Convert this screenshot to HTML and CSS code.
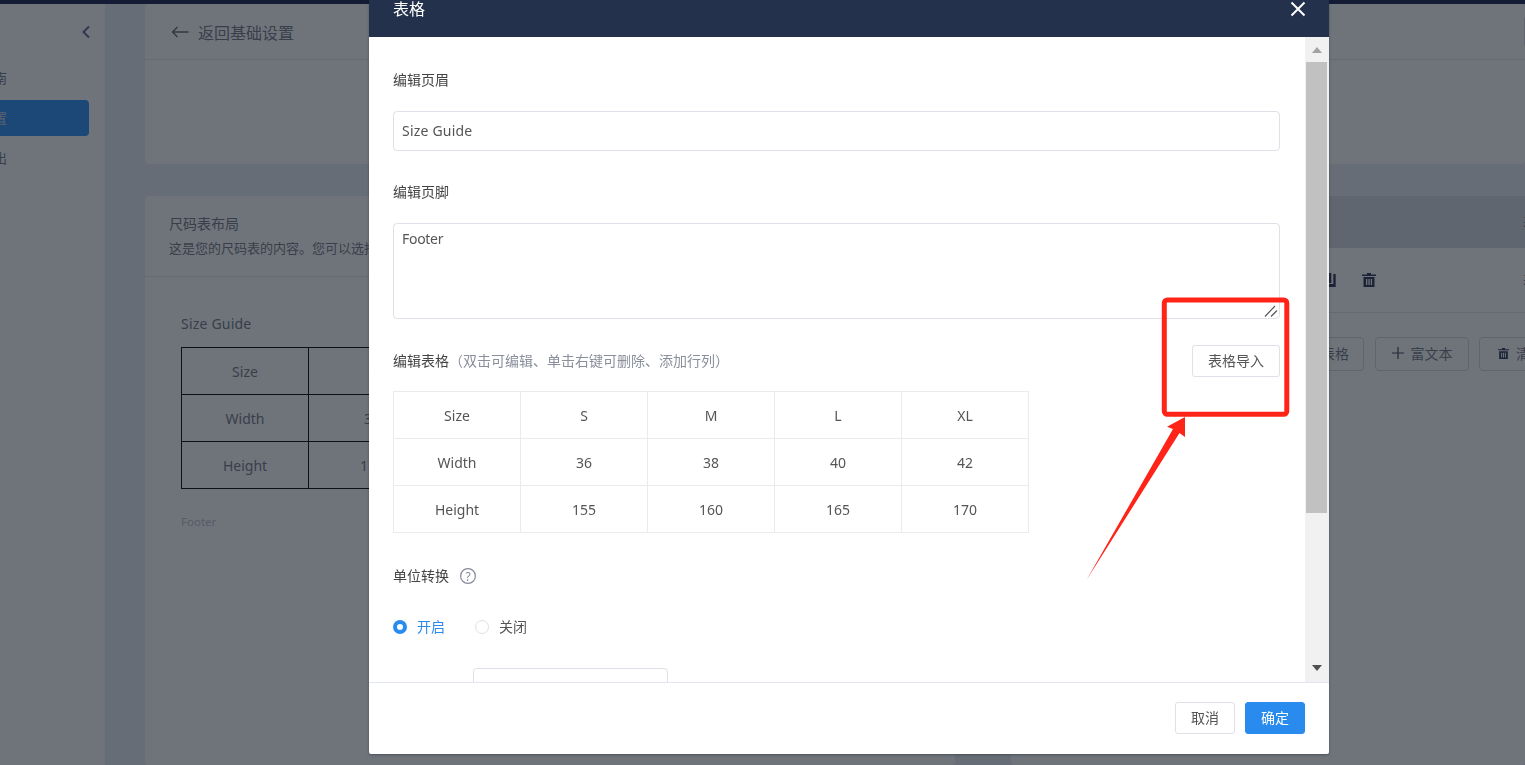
FILE: index.html
```html
<!DOCTYPE html>
<html lang="zh-CN">
<head>
    <meta charset="UTF-8">
    <title>尺码表</title>
    <link rel="stylesheet" href="styles.css">
</head>
<body>

<div class="topbar"></div>

<section class="layout">
    <aside class="sidebar">
        <div class="collapse">
            <svg width="10" height="14" viewBox="0 0 10 14"><path d="M8 1.5 2.5 7 8 12.5" fill="none" stroke="#5a6691" stroke-width="2"/></svg>
        </div>
        <div class="menu-item">尺码指南</div>
        <div class="menu-item active">基础设置</div>
        <div class="menu-item">导入导出</div>
    </aside>

    <section class="main">
        <div class="card card-top">
            <div class="card-title">
                <svg width="18" height="12" viewBox="0 0 18 12"><path d="M17.5 6H1.500M6.500 1 1.500 6l5 5" fill="none" stroke="#5f6575" stroke-width="1.300"/></svg>
                <span>返回基础设置</span>
            </div>
        </div>
        <div class="card card-fill">
            <div class="layout-head">
                <div class="layout-title">尺码表布局</div>
                <div class="layout-desc">这是您的尺码表的内容。您可以选择</div>
            </div>
            <div class="preview">
                <div class="preview-title">Size Guide</div>
                <table class="size-table preview-table">
                    <tr><td>Size</td><td>S</td><td>M</td><td>L</td><td>XL</td></tr>
                    <tr><td>Width</td><td>36</td><td>38</td><td>40</td><td>42</td></tr>
                    <tr><td>Height</td><td>155</td><td>160</td><td>165</td><td>170</td></tr>
                </table>
                <div class="preview-footer">Footer</div>
            </div>
        </div>
    </section>

    <section class="side">
        <div class="card card-top">
            <div class="side-top"><div class="side-edge"></div></div>
        </div>
        <div class="card card-fill">
            <div class="side-head"><span class="mark">表</span></div>
            <div class="side-tools">
                <svg class="tool" width="14" height="14" viewBox="0 0 14 14"><path d="M11.300 1h2.400v13H7v-3h4.300zM7 0h2.300v10H7z" fill="#2b3150"/></svg>
                <svg class="tool" width="14" height="14" viewBox="0 0 14 14"><path d="M5 0h4v1.500h5V3H0V1.500h5zM1.500 4h11v10h-11zM4 6v6h1.300V6zM6.400 6v6h1.300V6zM8.800 6v6h1.300V6z" fill="#2b3150" fill-rule="evenodd"/></svg>
                <span class="mark mark-row">表</span>
            </div>
            <div class="side-btns">
                <button class="ghost-btn btn-table">添加表格</button>
                <button class="ghost-btn btn-rich">
                    <svg width="12" height="12" viewBox="0 0 12 12"><path d="M6 0v12M0 6h12" stroke="#3b4150" stroke-width="1.200"/></svg>
                    富文本
                </button>
                <button class="ghost-btn btn-clear">
                    <svg width="11" height="11" viewBox="0 0 14 14"><path d="M5 0h4v1.500h5V3H0V1.500h5zM1.500 4h11v10h-11zM4 6v6h1.300V6zM6.400 6v6h1.300V6zM8.800 6v6h1.300V6z" fill="#2b3150" fill-rule="evenodd"/></svg>
                    清空
                </button>
            </div>
        </div>
    </section>
</section>

<div class="overlay">
    <section class="modal">
        <header class="modal-head">
            <span class="modal-title">表格</span>
            <svg width="16" height="16" viewBox="0 0 16 16"><path d="M1.500 1.500l13 13M14.500 1.500l-13 13" stroke="#fff" stroke-width="2"/></svg>
        </header>

        <div class="modal-body">
            <div class="form">
                <div class="label">编辑页眉</div>
                <div class="input">Size Guide</div>

                <div class="label label-next">编辑页脚</div>
                <div class="textarea">
                    Footer
                    <svg class="grip" width="14" height="12" viewBox="0 0 14 12"><path d="M1 11.500 11 1M7 11.500 13 5.500" stroke="#555" stroke-width="1.200" fill="none"/></svg>
                </div>

                <div class="table-head">
                    <div class="label">编辑表格<span class="hint">（双击可编辑、单击右键可删除、添加行列）</span></div>
                    <button class="btn">表格导入</button>
                </div>
                <table class="size-table edit-table">
                    <tr><td>Size</td><td>S</td><td>M</td><td>L</td><td>XL</td></tr>
                    <tr><td>Width</td><td>36</td><td>38</td><td>40</td><td>42</td></tr>
                    <tr><td>Height</td><td>155</td><td>160</td><td>165</td><td>170</td></tr>
                </table>

                <div class="label unit-label">
                    单位转换
                    <svg width="16" height="16" viewBox="0 0 16 16"><circle cx="8" cy="8" r="7.400" fill="none" stroke="#858a99" stroke-width="1.200"/><text x="8" y="12.500" text-anchor="middle" font-size="12" fill="#858a99" font-family="Noto Sans">?</text></svg>
                </div>
                <div class="radios">
                    <span class="radio on"><i></i>开启</span>
                    <span class="radio"><i></i>关闭</span>
                </div>
                <div class="select"></div>
            </div>

            <div class="scrollbar">
                <div class="arrow-up"></div>
                <div class="thumb"></div>
                <div class="arrow-down"></div>
            </div>
        </div>

        <footer class="modal-foot">
            <button class="btn foot-btn">取消</button>
            <button class="btn foot-btn primary">确定</button>
        </footer>
    </section>
</div>

<svg class="notes" width="1525" height="765" viewBox="0 0 1525 765">
    <rect x="1164.300" y="300" width="122.500" height="114.300" rx="3" fill="none" stroke="#ff2318" stroke-width="5"/>
    <polygon points="1086.500,580 1173,429 1167,426.700 1185,417 1185,437 1179.500,433" fill="#ff2318"/>
</svg>

</body>
</html>
```

FILE: styles.css
```css
* {
    box-sizing: border-box;
}
html, body {
    margin: 0;
    height: 100%;
    overflow: hidden;
}
body {
    display: flex;
    flex-direction: column;
    background: #ebeef2;
    color: #737682;
    font-family: "Noto Sans", "Noto Sans CJK SC", sans-serif;
    font-size: 14px;
}
table {
    border-collapse: collapse;
    table-layout: fixed;
    width: 636px;
}
td {
    height: 47px;
    padding: 0;
    text-align: center;
}
button {
    font-family: inherit;
}

.topbar {
    height: 4px;
    flex: none;
    background: #141e4a;
}
.layout {
    flex: 1;
    display: flex;
    min-height: 0;
}

/* left menu */
.sidebar {
    width: 105px;
    flex: none;
    margin-right: 40px;
    background: #fff;
    overflow: hidden;
}
.collapse {
    height: 56px;
    display: flex;
    justify-content: flex-end;
    align-items: center;
    padding-right: 14px;
}
.menu-item {
    width: 89px;
    height: 36px;
    margin-bottom: 4px;
    padding: 0 82px 2px 0;
    display: flex;
    justify-content: flex-end;
    align-items: center;
    white-space: nowrap;
    font-size: 13px;
    border-radius: 0 4px 4px 0;
}
.menu-item.active {
    background: #2a8ff5;
    color: #c5d0de;
}

/* page columns */
.main {
    width: 810px;
    flex: none;
    margin-right: 56px;
    display: flex;
    flex-direction: column;
}
.side {
    flex: 1;
    min-width: 0;
    display: flex;
    flex-direction: column;
    overflow: hidden;
}
.card {
    background: #fff;
    border-radius: 4px;
}
.card-top {
    height: 160px;
    margin-bottom: 32px;
    flex: none;
}
.card-fill {
    flex: 1;
}
.card-title {
    height: 56px;
    display: flex;
    align-items: center;
    gap: 9px;
    padding-left: 26px;
    border-bottom: 1px solid #e3e6ea;
    font-size: 16px;
}
.layout-head {
    height: 81px;
    padding: 16px 24px 0;
    border-bottom: 1px solid #e3e6ea;
    line-height: 24px;
    font-size: 13px;
}
.layout-title {
    font-size: 14px;
}
.preview {
    padding: 36px;
}
.preview-title {
    line-height: 22px;
    margin-bottom: 12px;
    letter-spacing: .2px;
}
.preview-table td {
    border: 1px solid #000;
}
.preview-footer {
    margin-top: 25px;
    font-size: 11.500px;
    color: #bcbfc8;
}

/* right column, mostly under the dialog */
.side-top {
    height: 56px;
    padding: 11px 0 0 513px;
    border-bottom: 1px solid #e3e6ea;
}
.side-edge {
    width: 60px;
    height: 33px;
    border: 1px solid #d5d8de;
    border-radius: 4px;
}
.side-head {
    height: 52px;
    padding-left: 512px;
    background: #d7dae0;
    display: flex;
    align-items: center;
}
.mark {
    flex: none;
    white-space: nowrap;
}
.side-tools {
    height: 65px;
    padding-left: 311px;
    display: flex;
    align-items: center;
    gap: 26px;
    border-bottom: 1px solid #e3e6ea;
}
.tool {
    flex: none;
}
.mark-row {
    margin-left: 121px;
}
.side-btns {
    display: flex;
    gap: 10px;
    padding: 24px 0 0 248px;
}
.ghost-btn {
    flex: none;
    height: 34px;
    padding: 0 0 2px;
    display: flex;
    justify-content: center;
    align-items: center;
    gap: 7px;
    background: none;
    border: 1px solid #d5d8de;
    border-radius: 4px;
    color: #737682;
    font-size: 14px;
}
.btn-table {
    width: 105px;
    margin-right: 1px;
    justify-content: flex-end;
    padding-right: 14px;
}
.btn-rich {
    width: 94px;
}
.btn-clear {
    width: 84px;
}

/* dialog */
.overlay {
    position: fixed;
    inset: 0;
    padding-left: 369px;
    background: rgba(20, 27, 40, .61);
}
.modal {
    width: 960px;
    height: 754px;
    display: flex;
    flex-direction: column;
    background: #fff;
    border-radius: 0 0 2px 2px;
    box-shadow: 0 1px 3px rgba(0, 0, 0, .3);
}
.modal-head {
    height: 37px;
    flex: none;
    display: flex;
    justify-content: space-between;
    align-items: flex-start;
    padding: 1px 23px 0 24px;
    background: #23314d;
    color: #fff;
}
.modal-title {
    font-size: 16px;
    line-height: 16px;
}
.modal-body {
    flex: 1;
    display: flex;
    min-height: 0;
}
.form {
    flex: 1;
    min-width: 0;
    padding: 33px 25px 0 24px;
    overflow: hidden;
    color: #555;
}
.label {
    line-height: 20px;
    font-size: 14px;
    color: #444;
    white-space: nowrap;
}
.label-next {
    margin-top: 31px;
}
.input,
.textarea {
    margin-top: 21px;
    padding: 0 8px;
    border: 1px solid #dfe1e8;
    border-radius: 4px;
    color: #555;
}
.input {
    height: 40px;
    line-height: 38px;
    letter-spacing: .2px;
}
.textarea {
    position: relative;
    height: 96px;
    line-height: 30px;
    letter-spacing: -.3px;
}
.grip {
    position: absolute;
    right: 1px;
    bottom: 1px;
}
.table-head {
    height: 32px;
    margin-top: 26px;
    display: flex;
    justify-content: space-between;
    align-items: center;
}
.hint {
    color: #8a8f9c;
}
.btn {
    width: 88px;
    height: 32px;
    padding: 0 0 2px;
    background: #fff;
    border: 1px solid #dfe1e8;
    border-radius: 3px;
    color: #555;
    font-size: 14px;
}
.edit-table {
    margin-top: 14px;
}
.edit-table td {
    border: 1px solid #ebebeb;
}
.unit-label {
    margin-top: 33px;
    display: flex;
    align-items: center;
    gap: 11px;
}
.radios {
    margin-top: 31px;
    display: flex;
    gap: 30px;
    line-height: 20px;
}
.radio {
    display: flex;
    align-items: center;
    gap: 10px;
}
.radio i {
    width: 14px;
    height: 14px;
    border: 1px solid #dfe1e8;
    border-radius: 50%;
}
.radio.on {
    color: #2a8bef;
}
.radio.on i {
    border: 4.500px solid #2a8bef;
    background: #fff;
}
.select {
    width: 195px;
    height: 40px;
    margin: 31px 0 0 80px;
    border: 1px solid #dfe1e8;
    border-radius: 4px;
}
.scrollbar {
    width: 24px;
    flex: none;
    display: flex;
    flex-direction: column;
    align-items: center;
    background: #f1f1f1;
}
.arrow-up {
    width: 0;
    margin: 10px 0 9px;
    border: 5.500px solid transparent;
    border-top: 0;
    border-bottom: 6px solid #a3a3a3;
}
.thumb {
    width: 21px;
    height: 451px;
    margin-right: 1px;
    background: #c1c1c1;
}
.arrow-down {
    width: 0;
    margin-top: auto;
    margin-bottom: 11px;
    border: 5.500px solid transparent;
    border-bottom: 0;
    border-top: 6px solid #505050;
}
.modal-foot {
    height: 72px;
    flex: none;
    display: flex;
    justify-content: flex-end;
    gap: 10px;
    padding: 19px 24px 0;
    border-top: 1px solid #e4e6ef;
}
.foot-btn {
    width: 60px;
}
.primary {
    background: #2a8bef;
    border-color: #2a8bef;
    color: #fff;
}

/* red marks drawn over the screenshot */
.notes {
    position: fixed;
    left: 0;
    top: 0;
    pointer-events: none;
}
```
